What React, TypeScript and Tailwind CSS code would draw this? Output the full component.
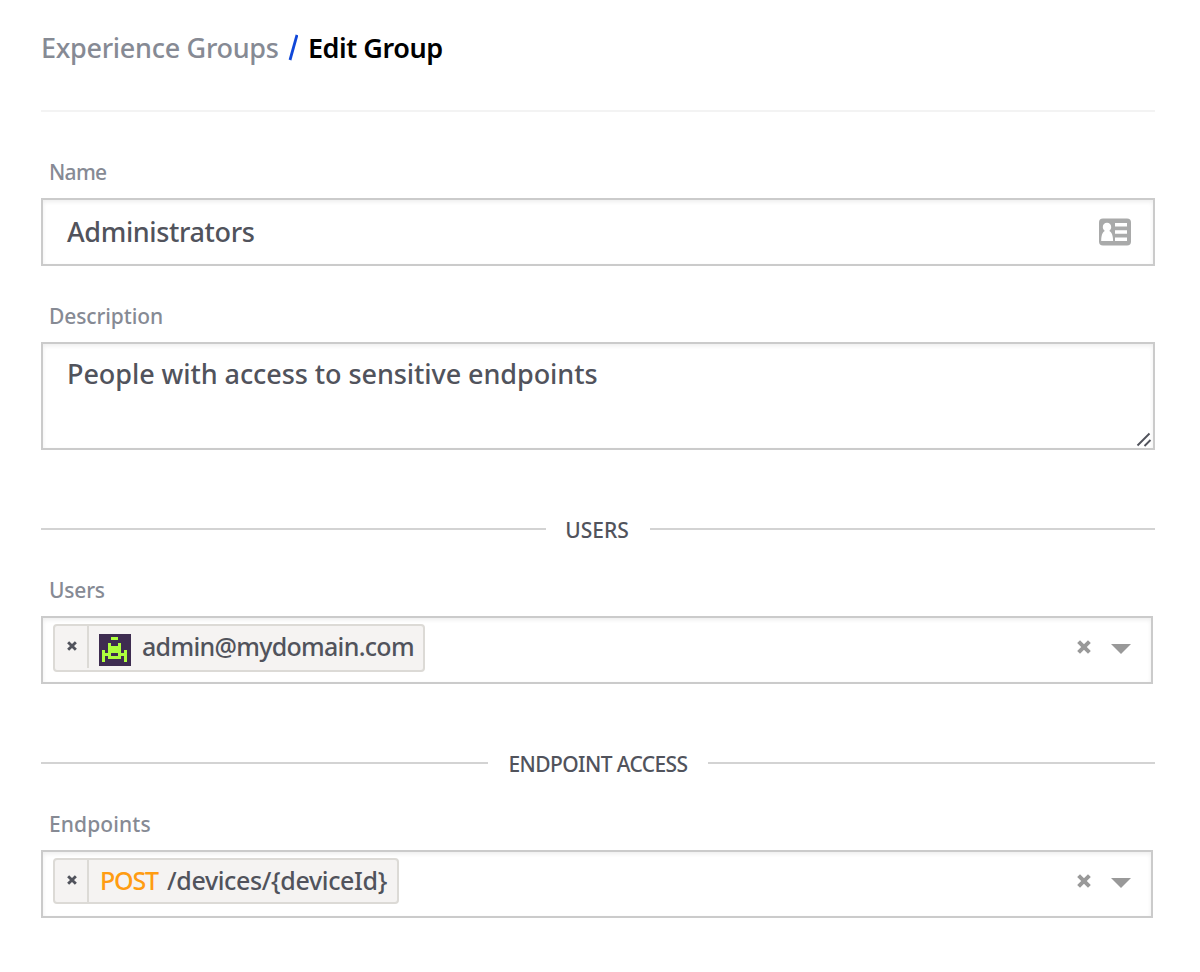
import type { ReactNode } from "react";

function Label({ children, className = "" }: { children: ReactNode; className?: string }) {
  return (
    <label className={`block h-[30px] pl-2 text-[21px] leading-[30px] font-medium text-[#868a94] ${className}`}>
      {children}
    </label>
  );
}

function SectionTitle({ children }: { children: ReactNode }) {
  return (
    <div className="flex h-[30px] items-center">
      <span className="h-0.5 w-0 flex-1 -translate-y-px bg-[#d3d3d3]" />
      {children}
      <span className="mr-0 h-0.5 w-0 flex-1 -translate-y-px bg-[#d3d3d3]" />
    </div>
  );
}

function Cross({ className }: { className: string }) {
  return (
    <svg viewBox="0 0 14 14" className={className} fill="none" stroke="currentColor" strokeWidth="4">
      <path d="M1.6 1.6 12.4 12.4M12.4 1.6 1.6 12.4" />
    </svg>
  );
}

function Chip({ children, className }: { children: ReactNode; className: string }) {
  return (
    <div className={`flex rounded-[4px] border-2 border-[#dcdad6] bg-[#f5f3f2] text-[25px] font-medium text-[#51535c] ${className}`}>
      <button className="flex h-[42px] w-[34px] items-center justify-center border-r-2 border-[#dcdad6] pb-0.5 pl-px">
        <Cross className="size-2.5 text-[#51535c]" />
      </button>
      <div className="flex h-[42px] items-center whitespace-pre">{children}</div>
    </div>
  );
}

function Select({ children }: { children: ReactNode }) {
  return (
    <div className="flex h-[68px] w-[1112px] items-start border-2 border-[#cbcbcb] bg-white pt-1.5 pl-2.5 shadow-[inset_0_2px_4px_rgba(0,0,0,0.07)]">
      {children}
      <div className="ml-auto flex h-[46px] items-center pr-5">
        <Cross className="mr-5 size-[14px] text-[#999999]" />
        <svg viewBox="0 0 20 10" className="mt-1 h-2.5 w-5 fill-[#999999]">
          <path d="M0 0h20L10 10z" />
        </svg>
      </div>
    </div>
  );
}

function ContactCardIcon() {
  return (
    <svg viewBox="0 0 32 28" className="h-7 w-8">
      <rect y=".5" width="32" height="27" rx="4" fill="#a9aaaa" />
      <path
        fill="#fff"
        d="M8 4.800c2.500 0 4.200 1.800 4.200 4.300 0 1.700-.8 3-1.900 3.800 2.400 1.100 3.800 4.500 3.800 10.100H2.200c0-5.600 1.300-9 3.600-10.100-1.200-.8-2-2.100-2-3.800C3.800 6.600 5.500 4.800 8 4.800zM16 5h12v3.500H16zM16 12.300h12v3.500H16zM16 19.600h12v3.400H16z"
      />
    </svg>
  );
}

function Avatar() {
  return (
    <svg viewBox="0 0 32 32" className="size-8" shapeRendering="crispEdges">
      <path fill="#3e2c50" d="M0 0h32v32H0z" />
      <path
        fill="#adff3d"
        fillRule="evenodd"
        d="M12 3h7v3h-7zM9 9h3v3h7V9h3v10h3v-3h3v12h-3v-6h-3v3H9v-3H6v6H3V16h3v3h3zM12 19v3h7v-3z"
      />
    </svg>
  );
}

export default function App() {
  return (
    <main className="h-[972px] w-[1200px] bg-white pt-[28px] pr-[45px] pl-[41px] font-['Noto_Sans',sans-serif]">
      <h1 className="flex h-10 items-center text-[27px] font-medium whitespace-pre">
        <span className="w-[247px] tracking-[-0.3px] text-[#868a94]">Experience Groups</span>
        <svg viewBox="0 0 10 28" className="h-7 w-2.5" aria-hidden="true">
          <path d="M9 1 2 26" stroke="#1047d8" strokeWidth="2.800" />
        </svg>
        <span className="pl-2.5 font-semibold tracking-[-0.45px] text-black">Edit Group</span>
      </h1>
      <hr className="mt-[42px] border-t-2 border-[#f3f3f3]" />

      <div className="mt-[45px]">
        <Label className="tracking-[-0.7px]">Name</Label>
        <div className="mt-[11px] flex h-[68px] items-center justify-between border-2 border-[#cbcbcb] pr-[22px] pl-6 text-[27px] font-medium text-[#51535c] shadow-[inset_0_2px_4px_rgba(0,0,0,0.07)]">
          <span className="tracking-[-0.37px]">Administrators</span>
          <ContactCardIcon />
        </div>
      </div>

      <div className="mt-[35px]">
        <Label className="tracking-[-0.1px]">Description</Label>
        <div className="mt-[11px] flex h-[108px] justify-between border-2 border-[#cbcbcb] pl-6 text-[27px] leading-[60px] font-medium text-[#51535c] shadow-[inset_0_2px_4px_rgba(0,0,0,0.07)]">
          <span className="tracking-[-0.07px]">People with access to sensitive endpoints</span>
          <svg viewBox="0 0 16 16" className="mr-px mb-px size-4 self-end" stroke="#51535c" strokeWidth="1.900">
            <path d="M1.500 14.500 13.500 2.500M8.500 15 14.500 9" />
          </svg>
        </div>
      </div>

      <div className="mt-[65px]">
        <SectionTitle>
          <span className="w-[104px] -translate-x-px translate-y-px text-center text-[21px] font-medium text-[#51535c]">USERS</span>
        </SectionTitle>
      </div>
      <div className="mt-[30px]">
        <Label className="tracking-[-0.2px]">Users</Label>
        <div className="mt-[11px]">
          <Select>
            <Chip className="h-12 w-[372px]">
              <span className="flex items-center pt-1.5 pl-2.5"><Avatar /></span>
              <span className="pl-[11px] tracking-[-0.7px]">admin@mydomain.com</span>
            </Chip>
          </Select>
        </div>
      </div>

      <div className="mt-[65px]">
        <SectionTitle>
          <span className="w-[220px] translate-y-px text-center text-[21px] font-medium tracking-[-0.6px] text-[#51535c]">ENDPOINT ACCESS</span>
        </SectionTitle>
      </div>
      <div className="mt-[30px]">
        <Label className="tracking-[0.1px]">Endpoints</Label>
        <div className="mt-[11px]">
          <Select>
            <Chip className="h-[46px] w-[346px]">
              <span className="w-[78px] pl-[11px] tracking-[-1.2px] text-[#ff9c12]">POST</span>
              <span className="tracking-[-0.36px]">{"/devices/{deviceId}"}</span>
            </Chip>
          </Select>
        </div>
      </div>
    </main>
  );
}
